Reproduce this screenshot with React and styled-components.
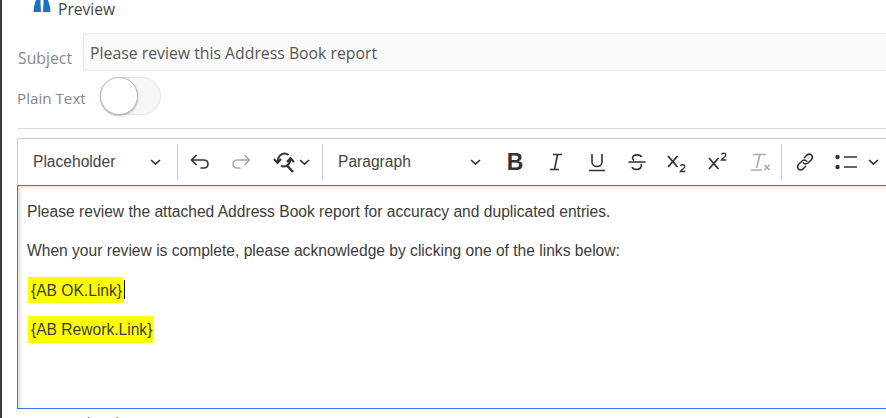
import styled, { createGlobalStyle } from "styled-components";

const GlobalStyle = createGlobalStyle`
  html, body {
    margin: 0;
    padding: 0;
    background: #fff;
  }
`;

const Page = styled.div`
  width: 886px;
  height: 418px;
  box-sizing: border-box;
  border-left: 2px solid #3c3c3c;
  overflow: hidden;
  background: #fff;
  font-family: "Open Sans", sans-serif;
  color: #555;
`;

const Header = styled.div`
  display: flex;
  align-items: flex-start;
  height: 18px;
  padding-left: 31px;
  gap: 7px;
  font-size: 15.6px;
  line-height: 18px;
  color: #444;
`;

const SubjectRow = styled.div`
  display: flex;
  align-items: flex-end;
  margin: 15px 0 0 16px;
  gap: 11px;
`;

const ToggleRow = styled.div`
  display: flex;
  align-items: center;
  margin: 6px 0 0 15px;
  gap: 14px;
`;

const SubjectLabel = styled.div`
  font-size: 15.8px;
  line-height: 20px;
  color: #888;
  margin-bottom: 3px;
`;

const ToggleLabel = styled.div`
  font-size: 15.2px;
  line-height: 20px;
  color: #888;
  padding-top: 4px;
`;

const SubjectInput = styled.div`
  flex: 1;
  height: 38px;
  box-sizing: border-box;
  border: 1px solid #e9e9e9;
  border-right: none;
  border-radius: 3px 0 0 3px;
  background: #fafafa;
  padding-left: 6px;
  font-size: 15.8px;
  line-height: 38px;
  color: #555;
`;

const Toggle = styled.div`
  width: 61px;
  height: 38px;
  box-sizing: border-box;
  border: 1px solid #e6e6e6;
  border-radius: 19px;
  background: #f6f6f6;
  position: relative;
`;

const Knob = styled.div`
  position: absolute;
  left: -1px;
  top: -1px;
  width: 38px;
  height: 38px;
  box-sizing: border-box;
  border-radius: 50%;
  background: #fff;
  border: 1px solid #bbb;
  box-shadow: 0 1px 2px rgba(0, 0, 0, 0.3);
`;

const Divider = styled.div`
  height: 1px;
  background: #ddd;
  margin: 13px 0 9px 15px;
`;

const Editor = styled.div`
  margin-left: 15px;
  font-family: "Liberation Sans", sans-serif;
`;

const Toolbar = styled.div`
  display: flex;
  align-items: center;
  height: 47px;
  box-sizing: border-box;
  border: 1px solid #c8c8c8;
  border-bottom: none;
  border-right: none;
  border-radius: 2px 0 0 0;
  color: #333;
  white-space: nowrap;
  overflow: hidden;
`;

const Dropdown = styled.div`
  display: flex;
  align-items: center;
  justify-content: space-between;
  box-sizing: border-box;
  flex: none;
  width: ${(p) => p.$width}px;
  padding: 0 ${(p) => p.$right}px 0 15px;
  font-size: 15.6px;
  color: #444;
`;

const Sep = styled.div`
  width: 1px;
  height: 36px;
  background: #ccc;
  flex: none;
`;

const Tool = styled.div`
  display: flex;
  align-items: center;
  justify-content: center;
  gap: ${(p) => p.$gap || 0}px;
  flex: none;
  width: ${(p) => p.$width}px;
  height: 36px;
  color: ${(p) => (p.$off ? "#aaa" : "#333")};
`;

const BoldGlyph = styled.span`
  font-weight: 700;
  font-size: 23px;
`;

const Content = styled.div`
  height: 224px;
  box-sizing: border-box;
  border: 1px solid #3b78d8;
  border-right: none;
  padding: 17px 0 0 9px;
  box-shadow: inset 3px 2px 3px rgba(0, 0, 0, 0.1);
  font-size: 15.6px;
  line-height: 18px;
  color: #3c3c3c;
`;

const Para = styled.p`
  margin: 0 0 ${(p) => p.$gap}px;
`;

const LinkLine = styled.p`
  margin: 0 0 ${(p) => p.$gap}px;
  display: flex;
  align-items: flex-start;
  height: ${(p) => p.$height}px;
`;

const Mark = styled.span`
  display: block;
  background: #ff0;
  padding: 1px 2px 0 3px;
  margin-left: 1px;
  line-height: ${(p) => p.$height - 1}px;
`;

const Caret = styled.span`
  display: block;
  width: 1px;
  height: 19px;
  background: #111;
  margin-top: 3px;
`;

const Footnote = styled.div`
  margin: 3px 0 0 26px;
  font-size: 15px;
  line-height: 20px;
  color: #555;
`;

const Chevron = () => (
  <svg width="11" height="10" viewBox="0 0 11 10" fill="none" stroke="#333" strokeWidth="1.7">
    <path d="M1 3l4.500 4.200L10 3" />
  </svg>
);

const Binoculars = () => (
  <svg width="18" height="13" viewBox="0 0 18 13" fill="#1a72c8">
    <path d="M3 0h4.500v3.500l.5 8.500H.5L1 6.500z" />
    <path d="M10.500 0H15l2 6.500.5 5.500H10l.5-8.500z" />
  </svg>
);

const IconSvg = ({ children, w = 22, h = 22, sw = 1.6 }) => (
  <svg width={w} height={h} viewBox={`0 0 ${w} ${h}`} fill="none" stroke="currentColor" strokeWidth={sw}>
    {children}
  </svg>
);

const ScriptX = ({ y }) => <path d={`M3 ${y}l9.500 11M12.500 ${y}L3 ${y + 11}`} />;

export default function App() {
  return (
    <Page>
      <GlobalStyle />
      <Header>
        <Binoculars />
        <span>Preview</span>
      </Header>
      <SubjectRow>
        <SubjectLabel>Subject</SubjectLabel>
        <SubjectInput>Please review this Address Book report</SubjectInput>
      </SubjectRow>
      <ToggleRow>
        <ToggleLabel>Plain Text</ToggleLabel>
        <Toggle>
          <Knob />
        </Toggle>
      </ToggleRow>
      <Divider />
      <Editor>
        <Toolbar>
          <Dropdown $width={159} $right={16}>
            Placeholder
            <Chevron />
          </Dropdown>
          <Sep />
          <Tool $width={44}>
            <IconSvg>
              <path d="M7.500 5L2.500 10l5 5M2.500 10h12c6 0 6 8 0 8h-3" transform="translate(0 -1)" />
            </IconSvg>
          </Tool>
          <Tool $width={38} $off>
            <IconSvg>
              <path d="M14.500 5l5 5-5 5M19.500 10h-12c-6 0-6 8 0 8h3" transform="translate(0 -1)" />
            </IconSvg>
          </Tool>
          <Tool $width={62} $gap={4}>
            <IconSvg sw={2}>
              <path d="M1 8l3.500 4L8 8M4.500 11.500C4.500 6 8 2.500 11.500 2.500c1.800 0 3 .7 4 1.500" />
              <path d="M21 11l-3.500-4-3.500 4M17.500 8c0 4-3 7.500-7 7.500-1 0-1.800-.2-2.500-.6" />
              <path d="M14 14.500l6 6.500" strokeWidth="2.400" />
            </IconSvg>
            <Chevron />
          </Tool>
          <Sep />
          <Dropdown $width={172} $right={14}>
            Paragraph
            <Chevron />
          </Dropdown>
          <Tool $width={40}>
            <BoldGlyph>B</BoldGlyph>
          </Tool>
          <Tool $width={41}>
            <IconSvg>
              <path d="M8 3.500h9M5 18.500h9M12.500 3.500l-3 15" />
            </IconSvg>
          </Tool>
          <Tool $width={41}>
            <IconSvg>
              <path d="M6 3v8c0 6 10 6 10 0V3M3 19.500h16" />
            </IconSvg>
          </Tool>
          <Tool $width={39}>
            <IconSvg>
              <path d="M15.500 6C14.500 3 7 3 6.500 6.800c0 1 .5 2 1.500 2.700M2.500 11h17M15 13c1.500 3-1 5.500-4.500 5.500-2.500 0-4-1-4.500-2.500" />
            </IconSvg>
          </Tool>
          <Tool $width={42}>
            <IconSvg w={24} h={24} sw={1.8}>
              <ScriptX y={6} />
              <path d="M15.500 16.200c.3-2 4.300-2 4.300.3 0 1.800-3 2.800-4.500 5h5" strokeWidth="1.300" />
            </IconSvg>
          </Tool>
          <Tool $width={40}>
            <IconSvg w={24} h={24} sw={1.8}>
              <ScriptX y={8} />
              <path d="M15.500 4.700c.3-2 4.300-2 4.300.3 0 1.800-3 2.800-4.500 5h5" strokeWidth="1.300" />
            </IconSvg>
          </Tool>
          <Tool $width={43} $off>
            <IconSvg w={24} h={24} sw={1.6}>
              <path d="M5 4.500h13M12 4.500L8.500 18M3 20h11M16.500 15l5 5M21.500 15l-5 5" />
            </IconSvg>
          </Tool>
          <Sep />
          <Tool $width={46}>
            <IconSvg>
              <path d="M10 7l3-3c3.500-2.500 7 1 4.500 4.500l-3.500 3.500c-2.500 2-4.500.5-5-.8M12 15l-3 3c-3.500 2.500-7-1-4.500-4.500L8 10c2.500-2 4.500-.5 5 .8" />
            </IconSvg>
          </Tool>
          <Tool $width={36}>
            <IconSvg w={24}>
              <circle cx="3.500" cy="6" r="2.200" fill="currentColor" stroke="none" />
              <circle cx="3.500" cy="16" r="2.200" fill="currentColor" stroke="none" />
              <path d="M10 6h13M10 16h13" />
            </IconSvg>
          </Tool>
          <Tool $width={18}>
            <Chevron />
          </Tool>
        </Toolbar>
        <Content>
          <Para $gap={21}>Please review the attached Address Book report for accuracy and duplicated entries.</Para>
          <Para $gap={17}>When your review is complete, please acknowledge by clicking one of the links below:</Para>
          <LinkLine $height={26} $gap={13}>
            <Mark $height={26}>{"{AB OK.Link}"}</Mark>
            <Caret />
          </LinkLine>
          <LinkLine $height={27} $gap={0}>
            <Mark $height={27}>{"{AB Rework.Link}"}</Mark>
          </LinkLine>
        </Content>
      </Editor>
      <Footnote>Approval Links</Footnote>
    </Page>
  );
}
